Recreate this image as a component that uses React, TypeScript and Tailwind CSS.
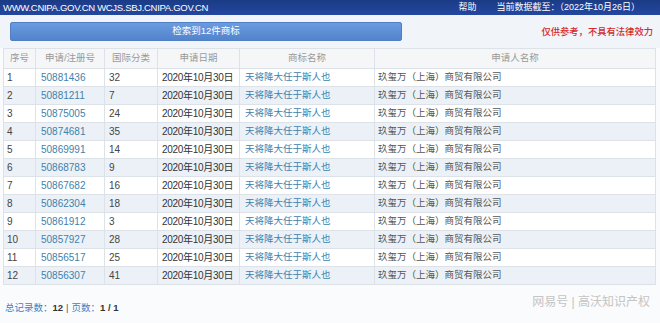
import React from 'react';

const rows = [
  ['1', '50881436', '32'],
  ['2', '50881211', '7'],
  ['3', '50875005', '24'],
  ['4', '50874681', '35'],
  ['5', '50869991', '14'],
  ['6', '50868783', '9'],
  ['7', '50867682', '16'],
  ['8', '50862304', '18'],
  ['9', '50861912', '3'],
  ['10', '50857927', '28'],
  ['11', '50856517', '25'],
  ['12', '50856307', '41'],
];

const font = { fontFamily: '"Liberation Sans", "Noto Sans CJK SC", sans-serif' };

const App = () => {
  return (
    <div
      className="w-[660px] h-[323px] overflow-hidden bg-[#fafbfc] text-[9.5px] text-[#333]"
      style={font}
    >
      <div className="h-[15px] flex items-center justify-between pl-[3px] pr-[20px] bg-gradient-to-b from-[#1b3b86] to-[#2447a0] text-white text-[9px] leading-none">
        <span className="text-[9.5px] tracking-[-0.3px]">WWW.CNIPA.GOV.CN WCJS.SBJ.CNIPA.GOV.CN</span>
        <div className="flex items-center">
          <span className="mr-[20px]">帮助</span>
          <span>当前数据截至：（2022年10月26日）</span>
        </div>
      </div>

      <div className="bg-[#f1f4f8] h-[33px] flex items-center pl-[10px] pr-[7px]">
        <div className="w-[392px] h-[19px] mt-[-1px] flex items-center justify-center rounded-[2px] border border-[#4f7fc4] bg-gradient-to-b from-[#6b9be0] to-[#5284cc] text-white">
          检索到12件商标
        </div>
        <div className="ml-auto mt-[2px] font-medium text-[#d42a2a] text-[9.3px]">仅供参考，不具有法律效力</div>
      </div>

      <table className="ml-[3px] w-[652px] table-fixed border-collapse">
        <colgroup>
          <col className="w-[32px]" />
          <col className="w-[69px]" />
          <col className="w-[53px]" />
          <col className="w-[82px]" />
          <col className="w-[135px]" />
          <col className="w-[281px]" />
        </colgroup>
        <thead>
          <tr className="h-[20px] bg-[#f5f6f7] text-[#9a9a9a]">
            <th className="font-normal border border-[#dde2e8]">序号</th>
            <th className="font-normal border border-[#dde2e8]">申请/注册号</th>
            <th className="font-normal border border-[#dde2e8]">国际分类</th>
            <th className="font-normal border border-[#dde2e8]">申请日期</th>
            <th className="font-normal border border-[#dde2e8]">商标名称</th>
            <th className="font-normal border border-[#dde2e8]">申请人名称</th>
          </tr>
        </thead>
        <tbody>
          {rows.map(([n, reg, cls], i) => (
            <tr
              key={n}
              className={i % 2 === 1 ? 'h-[18px] bg-[#ecf1f7]' : 'h-[18px] bg-white'}
            >
              <td className="pl-[3px] border border-[#dde2e8] text-[#444] text-[10px]">{n}</td>
              <td className="pl-[5px] border border-[#dde2e8] text-[#3d82ad] text-[10px]">{reg}</td>
              <td className="pl-[4px] border border-[#dde2e8] text-[#444] text-[10px]">{cls}</td>
              <td className="pl-[4px] border border-[#dde2e8] text-[#333] text-[10px] tracking-[-0.3px] whitespace-nowrap">2020年10月30日</td>
              <td className="pl-[5px] border border-[#dde2e8] text-[#3d82ad] whitespace-nowrap">天将降大任于斯人也</td>
              <td className="pl-[3px] border border-[#dde2e8] text-[#555]">玖玺万（上海）商贸有限公司</td>
            </tr>
          ))}
        </tbody>
      </table>

      <div className="relative mt-[16px] pl-[5px] flex items-center">
        <span className="text-[#3d7fc4]">总记录数：</span>
        <span className="font-bold text-[#333]">12</span>
        <span className="mx-[3px] text-[#555]">|</span>
        <span className="text-[#3d7fc4]">页数：</span>
        <span className="font-bold text-[#333]">1 / 1</span>
        <span className="ml-auto mr-[10px] mt-[-12px] text-[12px] text-[#c4c4c4]">网易号 | 高沃知识产权</span>
      </div>
    </div>
  );
};

export default App;
